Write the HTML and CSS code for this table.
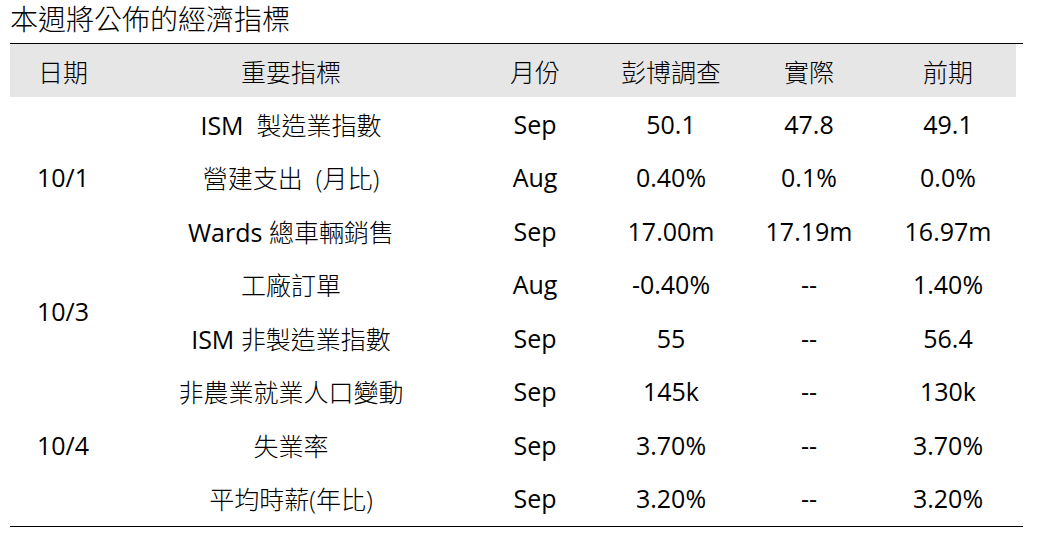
FILE: index.html
```html
<!DOCTYPE html>
<html lang="zh-Hant">
<head>
<meta charset="utf-8">
<link rel="stylesheet" href="styles.css">
</head>
<body>
<div class="page">
  <h1 class="title">本週將公佈的經濟指標</h1>
  <div class="frame">
    <table class="data">
      <colgroup>
        <col class="c-date"><col class="c-name"><col class="c-month"><col class="c-survey"><col class="c-actual"><col class="c-prev">
      </colgroup>
      <thead>
        <tr><th>日期</th><th>重要指標</th><th>月份</th><th>彭博調查</th><th>實際</th><th>前期</th></tr>
      </thead>
      <tbody>
        <tr><td rowspan="3">10/1</td><td>ISM&nbsp; <span class="zh">製造業指數</span></td><td>Sep</td><td>50.1</td><td>47.8</td><td>49.1</td></tr>
        <tr><td><span class="zh">營建支出&nbsp; (月比)</span></td><td>Aug</td><td>0.40%</td><td>0.1%</td><td>0.0%</td></tr>
        <tr><td>Wards <span class="zh">總車輛銷售</span></td><td>Sep</td><td>17.00m</td><td>17.19m</td><td>16.97m</td></tr>
        <tr><td rowspan="2">10/3</td><td><span class="zh">工廠訂單</span></td><td>Aug</td><td>-0.40%</td><td>--</td><td>1.40%</td></tr>
        <tr><td>ISM <span class="zh">非製造業指數</span></td><td>Sep</td><td>55</td><td>--</td><td>56.4</td></tr>
        <tr><td rowspan="3">10/4</td><td><span class="zh">非農業就業人口變動</span></td><td>Sep</td><td>145k</td><td>--</td><td>130k</td></tr>
        <tr><td><span class="zh">失業率</span></td><td>Sep</td><td>3.70%</td><td>--</td><td>3.70%</td></tr>
        <tr><td><span class="zh">平均時薪(年比)</span></td><td>Sep</td><td>3.20%</td><td>--</td><td>3.20%</td></tr>
      </tbody>
    </table>
  </div>
</div>
</body>
</html>
```
FILE: styles.css
```css
html, body {
  margin: 0;
  padding: 0;
  background: #ffffff;
}
body {
  font-family: "Open Sans", "Noto Sans CJK TC", sans-serif;
  font-weight: 400;
  color: #000000;
}
.page {
  padding: 0 15px 0 10px;
}
.title {
  margin: 0;
  height: 43px;
  font-size: 28px;
  font-weight: 300;
  line-height: 38px;
}
.frame {
  border-top: 1.5px solid #000;
  border-bottom: 1.5px solid #000;
  width: 1013px;
  padding-bottom: 1px;
}
.data {
  width: 1006px;
  border-collapse: collapse;
  table-layout: fixed;
  font-size: 25px;
}
.c-date { width: 106px; }
.c-name { width: 350px; }
.c-month { width: 138px; }
.c-survey { width: 134px; }
.c-actual { width: 142px; }
.c-prev { width: 136px; }
.data th {
  background: #e6e6e6;
  font-weight: 300;
  height: 53px;
  padding: 0;
  text-align: center;
  vertical-align: middle;
}
.data td {
  height: 53.5px;
  padding: 0;
  text-align: center;
  vertical-align: middle;
  white-space: nowrap;
}
.zh {
  font-weight: 300;
}
```
